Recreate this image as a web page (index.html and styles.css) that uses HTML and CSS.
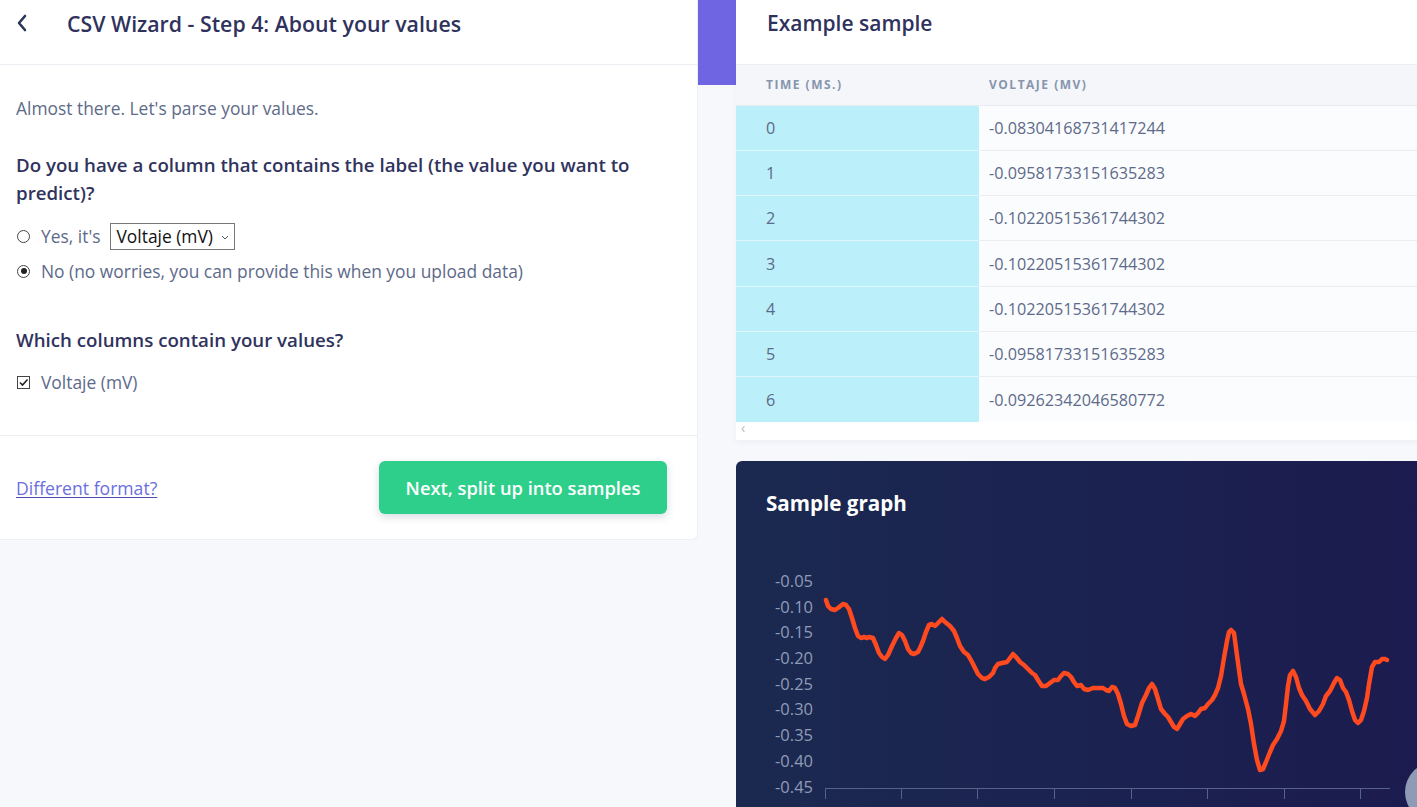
FILE: index.html
```html
<!DOCTYPE html>
<html lang="en">
<head>
<meta charset="utf-8">
<title>CSV Wizard - Step 4</title>
<link rel="stylesheet" href="styles.css">
</head>
<body>
<div class="page">
  <section class="wizard">
    <header class="wizard-head">
      <button class="back" aria-label="Back">
        <svg width="12" height="18" viewBox="0 0 12 18"><path d="M9 2 L3 9 L9 16" fill="none" stroke="#2b3557" stroke-width="2.6" stroke-linecap="round" stroke-linejoin="round"/></svg>
      </button>
      <h1 class="wizard-title">CSV Wizard - Step 4: About your values</h1>
    </header>
    <div class="wizard-body">
      <p class="intro">Almost there. Let's parse your values.</p>
      <h2 class="question">Do you have a column that contains the label (the value you want to predict)?</h2>
      <label class="option">
        <span class="radio"></span>
        <span>Yes, it's</span>
        <span class="select-wrap">
          <select class="select"><option>Voltaje (mV)</option></select>
          <svg class="chev" width="8" height="5" viewBox="0 0 8 5"><path d="M1 1 L4 4 L7 1" fill="none" stroke="#555" stroke-width="1"/></svg>
        </span>
      </label>
      <label class="option">
        <span class="radio checked"></span>
        <span>No (no worries, you can provide this when you upload data)</span>
      </label>
      <h2 class="question q2">Which columns contain your values?</h2>
      <label class="option">
        <span class="check">
          <svg width="11" height="11" viewBox="0 0 11 11"><path d="M2 5.5 L4.5 8 L9.5 2.5" fill="none" stroke="#222" stroke-width="1.6"/></svg>
        </span>
        <span>Voltaje (mV)</span>
      </label>
    </div>
    <footer class="wizard-foot">
      <a href="#" class="alt-link">Different format?</a>
      <button class="next">Next, split up into samples</button>
    </footer>
  </section>

  <div class="rail"><div class="rail-bar"></div></div>

  <section class="right">
    <div class="sample-card">
      <h2 class="card-title">Example sample</h2>
      <table class="sample">
        <thead>
          <tr><th>Time (ms.)</th><th>Voltaje (mV)</th></tr>
        </thead>
        <tbody>
          <tr><td>0</td><td>-0.08304168731417244</td></tr>
          <tr><td>1</td><td>-0.09581733151635283</td></tr>
          <tr><td>2</td><td>-0.10220515361744302</td></tr>
          <tr><td>3</td><td>-0.10220515361744302</td></tr>
          <tr><td>4</td><td>-0.10220515361744302</td></tr>
          <tr><td>5</td><td>-0.09581733151635283</td></tr>
          <tr><td>6</td><td>-0.09262342046580772</td></tr>
        </tbody>
      </table>
      <div class="hscroll"><span class="arrow">&lsaquo;</span></div>
    </div>

    <div class="graph-card">
      <h2 class="graph-title">Sample graph</h2>
      <svg class="chart" width="700" height="280" viewBox="736 540 700 280">
        <g class="ylabels" fill="#8f9cb8" font-size="16.5" text-anchor="end">
          <text x="813" y="587">-0.05</text>
          <text x="813" y="613">-0.10</text>
          <text x="813" y="638">-0.15</text>
          <text x="813" y="664">-0.20</text>
          <text x="813" y="690">-0.25</text>
          <text x="813" y="715">-0.30</text>
          <text x="813" y="741">-0.35</text>
          <text x="813" y="767">-0.40</text>
          <text x="813" y="793">-0.45</text>
        </g>
        <g stroke="#56628a" stroke-width="1">
          <line x1="825" y1="788.5" x2="1390" y2="788.5"/>
          <line x1="825.5" y1="788" x2="825.5" y2="799"/>
          <line x1="901.5" y1="788" x2="901.5" y2="799"/>
          <line x1="977.5" y1="788" x2="977.5" y2="799"/>
          <line x1="1054.5" y1="788" x2="1054.5" y2="799"/>
          <line x1="1131.5" y1="788" x2="1131.5" y2="799"/>
          <line x1="1207.5" y1="788" x2="1207.5" y2="799"/>
          <line x1="1284.5" y1="788" x2="1284.5" y2="799"/>
          <line x1="1360.5" y1="788" x2="1360.5" y2="799"/>
        </g>
        <polyline fill="none" stroke="#ff4a1f" stroke-width="4.5" stroke-linejoin="round" stroke-linecap="round"
          points="826,600 828,606 831,609 835,610 838,608 843,604 846,605 849,609 852,618 855,628 858,636 861,638 864,637 867,638 869,637 873,638 876,645 879,653 882,657 885,659 888,655 892,646 896,638 899,633 902,635 905,641 908,649 911,653 914,654 918,652 920,648 923,641 926,632 929,625 932,624 935,626 938,623 942,619 945,622 950,626 954,631 957,638 960,646 964,652 968,655 972,662 975,668 978,674 982,678 985,679 989,677 993,673 995,668 998,664 1002,663 1007,662 1010,658 1013,654 1016,657 1020,662 1024,665 1028,669 1032,673 1035,675 1038,680 1042,686 1046,686 1050,683 1054,680 1058,680 1061,676 1064,673 1068,674 1071,677 1074,682 1077,686 1081,685 1084,689 1088,690 1093,688 1098,688 1103,688 1106,690 1109,691 1112,687 1115,688 1118,694 1121,704 1124,716 1127,724 1131,726 1135,725 1138,716 1142,703 1146,695 1149,688 1152,684 1155,689 1158,699 1161,709 1165,714 1168,717 1171,722 1174,727 1177,729 1180,724 1183,719 1187,716 1191,714 1195,716 1198,713 1201,709 1205,708 1208,704 1212,700 1215,695 1218,688 1221,676 1224,658 1227,641 1229,632 1231,630 1234,633 1236,648 1239,670 1241,684 1244,694 1248,709 1251,724 1254,744 1257,760 1260,770 1263,769 1266,762 1270,752 1273,745 1277,739 1281,731 1284,721 1286,704 1288,686 1290,675 1293,671 1296,677 1299,688 1302,695 1306,701 1310,709 1315,715 1319,711 1323,704 1326,696 1330,691 1334,683 1337,678 1340,680 1343,688 1346,692 1349,700 1352,711 1355,720 1358,723 1361,720 1364,711 1367,698 1369,684 1372,667 1375,662 1379,662 1382,659 1385,659 1387,660"/>
      </svg>
    </div>
  </section>
</div>
<div class="chat-bubble" aria-hidden="true"></div>
</body>
</html>
```
FILE: styles.css
```css
* { box-sizing: border-box; }
html, body { margin: 0; padding: 0; }
body {
  background: #f7f8fc;
  font-family: "Open Sans", "Noto Sans", "Liberation Sans", sans-serif;
  color: #5a6788;
  width: 1417px;
  height: 807px;
  overflow: hidden;
  position: relative;
}
.page {
  display: flex;
  align-items: flex-start;
}

/* left wizard */
.wizard {
  flex: none;
  width: 698px;
  background: #fff;
  border-right: 1px solid #eceff4;
  border-bottom: 1px solid #eceff4;
  border-bottom-right-radius: 6px;
}
.wizard-head {
  height: 65px;
  border-bottom: 1px solid #eceef3;
  display: flex;
  align-items: center;
  padding: 0 0 0 14px;
}
.back {
  border: 0;
  background: none;
  padding: 0;
  width: 16px;
  height: 20px;
  display: flex;
  align-items: center;
  justify-content: center;
  margin-top: -19px;
  cursor: pointer;
}
.wizard-title {
  margin: -17px 0 0 37px;
  font-size: 21.3px;
  font-weight: 600;
  color: #2f325d;
  letter-spacing: 0;
}
.wizard-body {
  padding: 29px 16px 39px 16px;
  border-bottom: 1px solid #eceef3;
}
.intro {
  margin: 0;
  font-size: 17.4px;
  line-height: 28px;
  color: #5d6a89;
}
.question {
  margin: 29px 0 15px;
  font-size: 18.7px;
  line-height: 28px;
  font-weight: 600;
  color: #30335d;
}
.question.q2 { margin-top: 41px; margin-bottom: 14px; }
.option {
  display: flex;
  align-items: center;
  gap: 11px;
  font-size: 17.4px;
  line-height: 28px;
  color: #5d6a89;
  margin-bottom: 7px;
  height: 28px;
}
.option:last-child { margin-bottom: 0; }
.radio {
  width: 13px;
  height: 13px;
  border: 1px solid #444;
  border-radius: 50%;
  margin-left: 1px;
  position: relative;
  flex: none;
}
.radio.checked::after {
  content: "";
  position: absolute;
  left: 2.5px;
  top: 2.5px;
  width: 6px;
  height: 6px;
  border-radius: 50%;
  background: #222;
}
.check {
  width: 13px;
  height: 13px;
  border: 1px solid #444;
  margin-left: 1px;
  flex: none;
  display: flex;
  align-items: center;
  justify-content: center;
}
.select-wrap {
  position: relative;
  display: inline-block;
  margin-left: -1px;
}
.select {
  appearance: none;
  -webkit-appearance: none;
  font-family: inherit;
  font-size: 17.4px;
  color: #111;
  background: #fff;
  border: 1px solid #777;
  border-radius: 0;
  height: 27px;
  width: 125px;
  padding: 0 0 0 5px;
  line-height: 25px;
  display: block;
}
.chev {
  position: absolute;
  right: 6px;
  top: 12px;
}
.wizard-foot {
  height: 103px;
  display: flex;
  align-items: center;
  justify-content: space-between;
  padding: 0 30px 0 16px;
}
.alt-link {
  font-size: 17.6px;
  color: #6b6fe0;
  text-decoration: underline;
  text-decoration-color: #4b50b0;
  text-underline-offset: 2px;
}
.next {
  width: 288px;
  height: 53px;
  border: 0;
  border-radius: 6px;
  background: #2ecf8b;
  color: #fff;
  font-family: inherit;
  font-size: 18.3px;
  font-weight: 600;
  box-shadow: 0 3px 8px rgba(30, 60, 90, 0.18);
  cursor: pointer;
}

/* rail */
.rail {
  flex: none;
  width: 38px;
}
.rail-bar {
  width: 38px;
  height: 85px;
  background: #6f65e2;
}

/* right column */
.right {
  flex: none;
  width: 720px;
}
.sample-card {
  background: #fff;
  box-shadow: 0 2px 6px rgba(40, 50, 90, 0.05);
}
.card-title {
  margin: 0;
  height: 65px;
  line-height: 46px;
  padding-left: 31px;
  font-size: 21px;
  font-weight: 600;
  color: #2f325d;
  border-bottom: 1px solid #eceef3;
}
.sample {
  border-collapse: collapse;
  width: 100%;
}
.sample th {
  background: #f4f6fa;
  height: 40px;
  text-align: left;
  font-size: 12px;
  font-weight: 700;
  letter-spacing: 1.5px;
  text-transform: uppercase;
  color: #8795ad;
  border-bottom: 1px solid #e8ebf0;
  padding: 0;
}
.sample th:first-child,
.sample td:first-child { padding-left: 30px; width: 243px; }
.sample th:last-child,
.sample td:last-child { padding-left: 10px; }
.sample td {
  height: 45.3px;
  font-size: 16.2px;
  color: #5d6a89;
  border-bottom: 1px solid #e9ecf1;
  padding-top: 0;
  padding-bottom: 0;
  background: #fbfcfe;
}
.sample td:first-child {
  background: #bbeffa;
  border-bottom-color: #dff6fb;
}
.sample tr:last-child td { border-bottom: 0; }
.hscroll {
  height: 18px;
  position: relative;
}
.arrow {
  position: absolute;
  left: 5px;
  top: -4px;
  font-size: 14px;
  color: #b7bcc6;
}
.graph-card {
  margin-top: 21px;
  height: 360px;
  border-radius: 6px;
  background: linear-gradient(90deg, #1b2950 0%, #1b2150 60%, #1c1a4f 100%);
  overflow: hidden;
}
.graph-title {
  margin: 0;
  padding: 30px 0 0 30px;
  height: 79px;
  line-height: 24px;
  font-size: 20.6px;
  font-weight: 700;
  color: #fff;
}
.chart {
  display: block;
  font-family: "Open Sans", "Noto Sans", sans-serif;
}
.chat-bubble {
  position: absolute;
  left: 1405px;
  top: 762px;
  width: 60px;
  height: 60px;
  border-radius: 50%;
  background: #8d9bb5;
}
```
